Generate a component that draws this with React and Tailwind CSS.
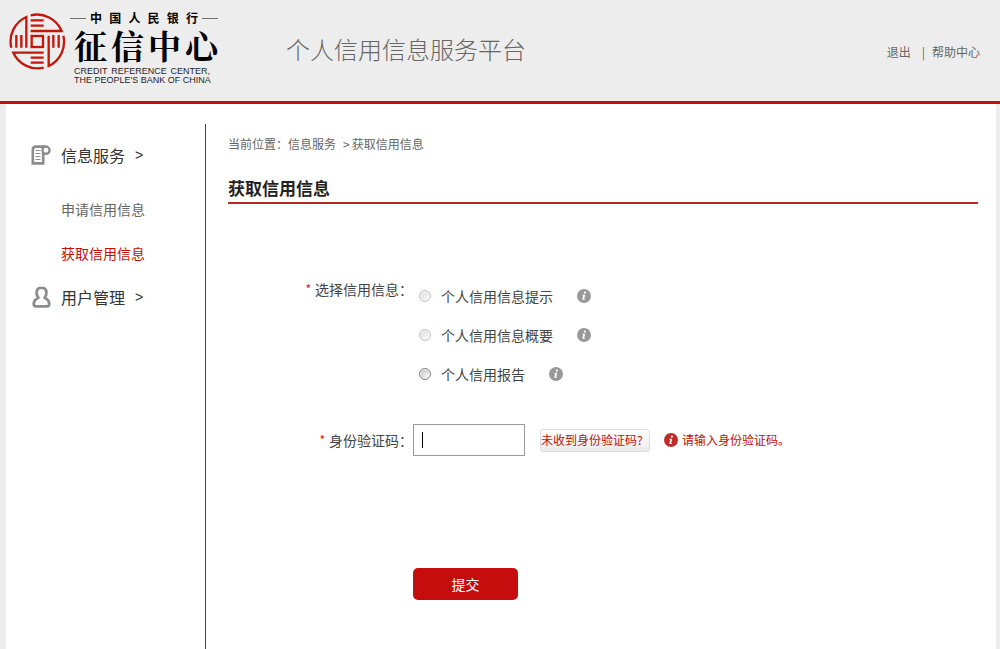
import React from "react";

function SealLogo() {
  return (
    <svg className="size-[58px] shrink-0" viewBox="24 24 174 174" fill="none" stroke="#c4170c" strokeWidth="7" aria-hidden="true">
      <path d="M34 128A80 80 0 0 1 79 36V128M49 90V128M64 90V128" />
      <path d="M92 31A80 80 0 0 1 185 78H92M92 46H131M92 62H131" />
      <path d="M190 92A80 80 0 0 1 146 183V92M160 90V128M176 90V128" />
      <path d="M131 188A80 80 0 0 1 40 143H131M92 158H131M92 173H131" />
      <rect x="95" y="93" width="34" height="33" />
    </svg>
  );
}

function Wordmark() {
  return (
    <div className="w-[148px] text-black">
      <div className="flex h-4 items-center gap-1">
        <span className="h-px w-4 bg-neutral-500" />
        <span className="flex flex-1 justify-between text-xs leading-4 font-bold">
          {[..."中国人民银行"].map((c) => (
            <span key={c}>{c}</span>
          ))}
        </span>
        <span className="h-px w-4 bg-neutral-500" />
      </div>
      <div className="flex h-10 justify-between pl-1 font-['Noto_Serif_CJK_SC','Noto_Sans_CJK_SC',sans-serif] text-[33px] leading-[38px] font-bold">
        {[..."征信中心"].map((c) => (
          <span key={c}>{c}</span>
        ))}
      </div>
      <div className="mt-px mr-2 ml-1 font-['Liberation_Sans',sans-serif] text-[9px] leading-[9px] whitespace-nowrap text-neutral-800">
        <div className="flex justify-between">
          <span>CREDIT</span>
          <span>REFERENCE</span>
          <span>CENTER,</span>
        </div>
        <div>THE PEOPLE'S BANK OF CHINA</div>
      </div>
    </div>
  );
}

function InfoIcon({ className }) {
  return (
    <svg className={`size-[14px] shrink-0 ${className}`} viewBox="0 0 14 14" aria-hidden="true">
      <circle cx="7" cy="7" r="7" fill="currentColor" />
      <circle cx="7.9" cy="3.6" r="1.1" fill="#fff" />
      <path d="M5.4 5.7H8.2L7.2 10H8.1L7.9 10.8H5.3L6.2 6.6H5.2Z" fill="#fff" />
    </svg>
  );
}

function DocIcon() {
  return (
    <svg className="size-5" viewBox="0 0 20 20" fill="none" stroke="#8c8c8c" strokeWidth="2.6" aria-hidden="true">
      <path d="M15 1.6H5Q1.8 1.6 1.8 5V18.4H12.2V8" />
      <circle cx="15" cy="5.3" r="3.6" strokeWidth="2.3" />
      <path d="M4.5 5.5H9.5M4.5 8.5H9.5M4.5 11.5H9.5M4.5 14.5H9.5" strokeWidth="1.2" />
    </svg>
  );
}

function UserIcon() {
  return (
    <svg className="h-[22px] w-5" viewBox="0 0 20 22" fill="none" stroke="#8c8c8c" strokeWidth="2.8" strokeLinejoin="round" aria-hidden="true">
      <path d="M10.5 1.6C7.2 1.6 5.6 3.6 5.6 6.8C5.6 9 6.2 10.6 7.4 11.8C4.8 13 2.8 15.2 2.8 18Q2.8 20.4 5 20.4H16Q18.2 20.4 18.2 18C18.2 15.2 16.2 13 13.6 11.8C14.8 10.6 15.4 9 15.4 6.8C15.4 3.6 13.8 1.6 10.5 1.6Z" />
    </svg>
  );
}

const options = [
  { id: "tip", label: "个人信用信息提示", disabled: true },
  { id: "summary", label: "个人信用信息概要", disabled: true },
  { id: "report", label: "个人信用报告", disabled: false },
];

export default function App() {
  return (
    <div className="flex min-h-screen flex-col bg-[#ededed] font-['Noto_Sans_CJK_SC',sans-serif] text-sm text-[#444]">
      <header className="flex items-start border-b-3 border-[#c21005] pr-5 pb-4 pl-2">
        <div className="flex gap-1 pt-[10px]">
          <div className="pt-[3px]">
            <SealLogo />
          </div>
          <Wordmark />
        </div>
        <h1 className="ml-[68px] pt-[33px] text-2xl leading-8 font-light text-[#666]">个人信用信息服务平台</h1>
        <nav className="ml-auto flex pt-11 text-xs leading-4 text-[#666]">
          <a href="#logout">退出</a>
          <span className="mr-[7px] ml-[11px]">|</span>
          <a href="#help">帮助中心</a>
        </nav>
      </header>

      <div className="mr-1 ml-[6px] flex flex-1 bg-white pt-5">
        <aside className="w-[200px] shrink-0 border-r border-[#c21005] pt-[19px] pl-[25px] text-[#666]">
          <a href="#info" className="flex h-6 items-center gap-[10px] text-base text-[#333]">
            <DocIcon />
            <span>信息服务</span>
            <span className="font-['Liberation_Sans',sans-serif] text-sm">&gt;</span>
          </a>
          <ul className="mt-[30px] mb-5 flex flex-col gap-5 pl-[30px] leading-6">
            <li><a href="#apply">申请信用信息</a></li>
            <li><a href="#get" className="text-[#c21005]">获取信用信息</a></li>
          </ul>
          <a href="#user" className="flex h-6 items-center gap-[10px] text-base text-[#333]">
            <UserIcon />
            <span>用户管理</span>
            <span className="font-['Liberation_Sans',sans-serif] text-sm">&gt;</span>
          </a>
        </aside>

        <main className="flex-1 pt-3 pr-[18px] pl-[22px]">
          <div className="flex text-xs leading-4 text-[#666]">
            <span>当前位置：</span>
            <a href="#info">信息服务</a>
            <span className="mr-[2px] ml-[7px]">&gt;</span>
            <span>获取信用信息</span>
          </div>
          <h2 className="mt-6 border-b-2 border-[#b22a2a] pb-[2px] text-[17px] leading-6 font-bold text-[#222]">获取信用信息</h2>

          <form className="pt-[73px]" onSubmit={(e) => e.preventDefault()}>
            <div className="flex" role="radiogroup" aria-labelledby="kind">
              <div id="kind" className="flex w-[185px] shrink-0 justify-end gap-1 leading-6">
                <span className="text-xs leading-6 text-[#d01818]">*</span>选择信用信息：
              </div>
              <div className="flex flex-col gap-[15px] pt-[7px] pl-[6px]">
                {options.map((o) => (
                  <div key={o.id} className="flex h-6 items-center">
                    <input
                      id={o.id}
                      type="radio"
                      name="kind"
                      disabled={o.disabled}
                      className="size-3 shrink-0 appearance-none rounded-full border border-[#858585] bg-radial-[at_70%_70%] from-[#f4f4f4] to-[#b5bcc2] shadow-[inset_0_0_0_1px_#f4f4f4] disabled:border-[#c4c4c4] disabled:from-[#f6f6f6] disabled:to-[#dcdcdc]"
                    />
                    <label htmlFor={o.id} className="ml-[10px] leading-6">{o.label}</label>
                    <InfoIcon className="ml-6 text-[#999]" />
                  </div>
                ))}
              </div>
            </div>

            <div className="mt-[38px] flex items-center">
              <label htmlFor="code" className="flex w-[185px] shrink-0 justify-end gap-1 leading-6">
                <span className="text-xs leading-6 text-[#d01818]">*</span>身份验证码：
              </label>
              <div className="relative">
                <input id="code" type="text" className="block h-8 w-28 border border-[#999] bg-white px-2 caret-transparent outline-none" />
                <span className="pointer-events-none absolute top-2 left-[9px] h-4 w-px bg-black" />
              </div>
              <button type="button" className="ml-[15px] h-[23px] w-[110px] rounded-[3px] border border-[#ddd] bg-linear-to-b from-white to-[#ebebeb] text-left text-xs leading-5 whitespace-nowrap text-[#c21005]">
                未收到身份验证码?
              </button>
              <InfoIcon className="ml-[14px] text-[#c22a2a]" />
              <span className="ml-1 text-xs leading-4 text-[#c21005]">请输入身份验证码。</span>
            </div>

            <button type="submit" className="mt-28 ml-[185px] block h-8 w-[105px] rounded-[5px] bg-[#c60d0d] text-sm text-white">提交</button>
          </form>
        </main>
      </div>
    </div>
  );
}
